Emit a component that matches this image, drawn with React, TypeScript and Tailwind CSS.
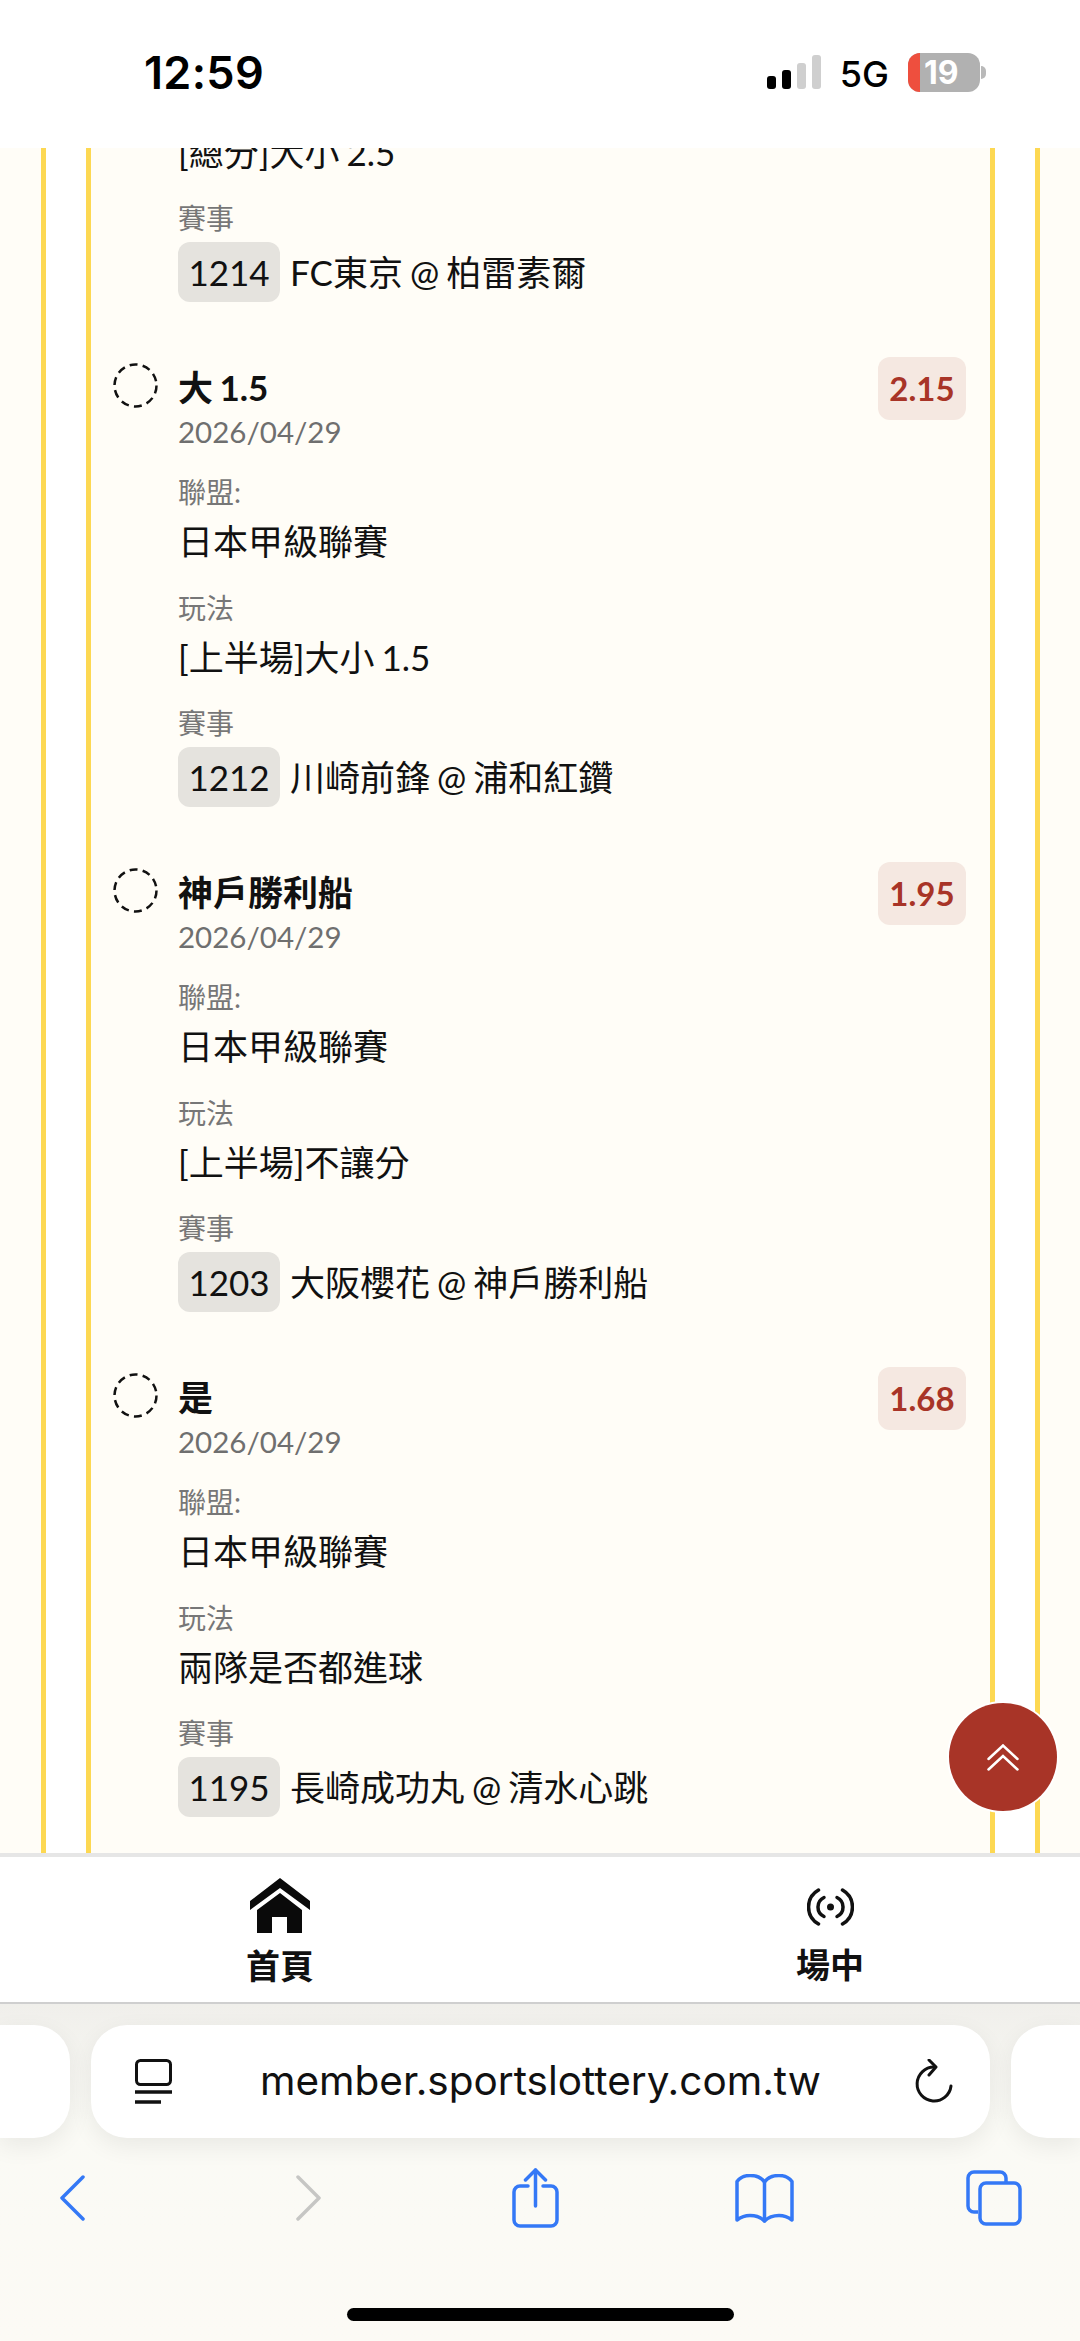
const bets = [
  { title: "大 1.5", odds: "2.15", play: "[上半場]大小 1.5", code: "1212", match: "川崎前鋒 @ 浦和紅鑽" },
  { title: "神戶勝利船", odds: "1.95", play: "[上半場]不讓分", code: "1203", match: "大阪櫻花 @ 神戶勝利船" },
  { title: "是", odds: "1.68", play: "兩隊是否都進球", code: "1195", match: "長崎成功丸 @ 清水心跳" },
];

function PlayAndMatch({ play, code, match }: { play: string; code: string; match: string }) {
  return (
    <>
      <div className="text-[35px] leading-[48px] text-[#111]">{play}</div>
      <div className="mt-[22px] text-[28px] leading-[40px] text-[#777]">賽事</div>
      <div className="mt-[4px] flex items-center">
        <span className="flex h-[60px] w-[102px] items-center justify-center rounded-[12px] bg-[#e5e3de] text-[35px] text-[#111]">
          {code}
        </span>
        <span className="ml-[10px] text-[35px] text-[#111]">{match}</span>
      </div>
    </>
  );
}

function BetRow({ title, odds, play, code, match }: (typeof bets)[number]) {
  return (
    <div className="flex pt-[55px]">
      <svg viewBox="0 0 45 45" className="mt-[6px] h-[45px] w-[45px] shrink-0" fill="none" stroke="#111" strokeWidth="2.5" strokeDasharray="8 5.2">
        <circle cx="22.5" cy="22.5" r="21" />
      </svg>
      <div className="ml-[20px] flex-1">
        <div className="flex h-[63px] items-center justify-between">
          <span className="-mt-[2px] text-[35px] font-bold text-[#111]">{title}</span>
          <span className="flex h-[63px] w-[88px] items-center justify-center rounded-[12px] bg-[#f5e8e1] text-[33px] font-bold text-[#a83427]">
            {odds}
          </span>
        </div>
        <div className="-mt-[10px] text-[29.5px] leading-[44px] text-[#6f6f6f]">2026/04/29</div>
        <div className="mt-[18px] text-[28px] leading-[40px] text-[#777]">聯盟:</div>
        <div className="mt-[5px] text-[35px] leading-[48px] text-[#111]">日本甲級聯賽</div>
        <div className="mt-[23px] text-[28px] leading-[40px] text-[#777]">玩法</div>
        <div className="mt-[5px]">
          <PlayAndMatch play={play} code={code} match={match} />
        </div>
      </div>
    </div>
  );
}

function StatusBar() {
  return (
    <div className="flex h-[148px] shrink-0 items-start bg-white font-['Inter',sans-serif]">
      <span className="ml-[144px] mt-[48px] text-[45px] font-semibold leading-[50px] tracking-[0.3px] text-black">12:59</span>
      <div className="ml-auto mr-[94px] mt-[53px] flex items-start">
        <div className="mt-[2px] flex h-[34px] items-end gap-[6px]">
          <div className="h-[13px] w-[9px] rounded-[3px] bg-black" />
          <div className="h-[19px] w-[9px] rounded-[3px] bg-black" />
          <div className="h-[26px] w-[9px] rounded-[3px] bg-[#cfcfcf]" />
          <div className="h-[34px] w-[9px] rounded-[3px] bg-[#cfcfcf]" />
        </div>
        <span className="ml-[19px] mt-[2px] text-[36px] font-medium leading-[38px] text-black">5G</span>
        <div className="relative ml-[19px] flex h-[39px] w-[72px] items-center overflow-hidden rounded-[12px] bg-[#b1b1b1]">
          <div className="h-full w-[12px] bg-[#ee4f3e]" />
          <span className="ml-[4px] text-[32px] font-bold leading-none text-white">19</span>
        </div>
        <div className="ml-[1px] mt-[13px] h-[13px] w-[5px] rounded-r-full bg-[#b9b9b9]" />
      </div>
    </div>
  );
}

function BottomNav() {
  return (
    <div className="flex h-[151px] shrink-0 border-t-[4px] border-b-[2px] border-t-[#e6e6e6] border-b-[#cfcfcf] bg-white">
      <div className="flex w-[560px] flex-col items-center pt-[21px]">
        <svg viewBox="0 0 60 55" className="h-[55px] w-[60px]" fill="#0a0a0a">
          <path d="M30 0 60 23V32L30 10 0 32V23Z" />
          <path d="M30 15 52 32V55H37V39H22V55H7V32Z" />
        </svg>
        <span className="mt-[11px] text-[34px] font-semibold leading-[44px] text-[#111]">首頁</span>
      </div>
      <div className="ml-[20px] flex flex-1 flex-col items-center pt-[31px]">
        <svg viewBox="0 0 47 38" className="h-[38px] w-[47px]" fill="none" stroke="#111" strokeWidth="3.5" strokeLinecap="round">
          <circle cx="23.5" cy="19" r="3.5" fill="#111" stroke="none" />
          <path d="M17 9.5A10.5 10.5 0 0 0 17 28.5M30 9.5A10.5 10.5 0 0 1 30 28.5" />
          <path d="M11.5 2A19.5 19.5 0 0 0 11.5 36M35.5 2A19.5 19.5 0 0 1 35.5 36" />
        </svg>
        <span className="mt-[17px] text-[34px] font-semibold leading-[44px] text-[#111]">場中</span>
      </div>
    </div>
  );
}

function BrowserChrome() {
  return (
    <div className="h-[337px] shrink-0 bg-gradient-to-b from-[#f0efeb] via-[#fafaf5] via-35% to-[#fcfaf5] pt-[21px] font-['Inter',sans-serif]">
      <div className="flex h-[113px] gap-[21px]">
        <div className="h-[113px] w-[70px] shrink-0 rounded-r-[36px] bg-white shadow-[0_8px_24px_rgba(0,0,0,0.07)]" />
        <div className="flex h-[113px] w-[899px] shrink-0 items-center rounded-[36px] bg-white pl-[44px] pr-[37px] shadow-[0_8px_24px_rgba(0,0,0,0.07)]">
          <svg viewBox="0 0 37 45" className="h-[45px] w-[37px] shrink-0" fill="none" stroke="#111">
            <rect x="1.5" y="1.5" width="34" height="24" rx="4" strokeWidth="3" />
            <path d="M0 33H37" strokeWidth="3.5" />
            <path d="M0 43H26" strokeWidth="3.5" />
          </svg>
          <span className="ml-[88px] text-[40.5px] leading-none text-[#111]">member.sportslottery.com.tw</span>
          <svg viewBox="0 0 38 46" className="ml-auto h-[46px] w-[38px] shrink-0" fill="none" stroke="#111" strokeWidth="3" strokeLinecap="round" strokeLinejoin="round">
            <path d="M19 8A17 17 0 1 0 36 27" />
            <path d="M14 1 21 8 14 16" />
          </svg>
        </div>
        <div className="h-[113px] flex-1 rounded-l-[36px] bg-white shadow-[0_8px_24px_rgba(0,0,0,0.07)]" />
      </div>
      <div className="mt-[30px] flex h-[60px] items-center pl-[60px]">
        <svg viewBox="0 0 25 46" className="h-[46px] w-[25px]" fill="none" stroke="#3478f6" strokeWidth="3.5" strokeLinecap="round" strokeLinejoin="round">
          <path d="M23 2 2 23 23 44" />
        </svg>
        <svg viewBox="0 0 25 46" className="ml-[211px] h-[46px] w-[25px]" fill="none" stroke="#c6c6c4" strokeWidth="3.5" strokeLinecap="round" strokeLinejoin="round">
          <path d="M2 2 23 23 2 44" />
        </svg>
        <svg viewBox="0 0 47 60" className="ml-[191px] h-[60px] w-[47px]" fill="none" stroke="#3478f6" strokeWidth="3.5" strokeLinecap="round" strokeLinejoin="round">
          <path d="M16 18H8a6 6 0 0 0-6 6v28a6 6 0 0 0 6 6h31a6 6 0 0 0 6-6V24a6 6 0 0 0-6-6h-8" />
          <path d="M23.5 38V2" />
          <path d="M13.5 12 23.5 2 33.5 12" />
        </svg>
        <svg viewBox="0 0 59 49" className="ml-[176px] h-[49px] w-[59px]" fill="none" stroke="#3478f6" strokeWidth="3.5" strokeLinecap="round" strokeLinejoin="round">
          <path d="M29.5 8C26 3 20 1.5 15 1.5 10 1.5 5 3.5 2 7.5V46C6 43 10 41.5 15 41.5 21 41.5 26 43.5 29.5 47 33 43.5 38 41.5 44 41.5 49 41.5 53 43 57 46V7.5C54 3.5 49 1.5 44 1.5 39 1.5 33 3 29.5 8Z" />
          <path d="M29.5 8V47" />
        </svg>
        <svg viewBox="0 0 56 56" className="ml-[172px] h-[56px] w-[56px]" fill="none" stroke="#3478f6" strokeWidth="3.5" strokeLinejoin="round">
          <path d="M12 42H8a6 6 0 0 1-6-6V8a6 6 0 0 1 6-6h26a6 6 0 0 1 6 6v4" />
          <rect x="14" y="13" width="40" height="41" rx="6" />
        </svg>
      </div>
      <div className="mx-auto mt-[80px] h-[13px] w-[387px] rounded-full bg-black" />
    </div>
  );
}

export default function App() {
  return (
    <div className="relative flex h-[2341px] w-[1080px] flex-col overflow-hidden bg-white font-['Lato','Noto_Sans_CJK_TC',sans-serif] [word-spacing:-2px]">
      <StatusBar />

      {/* scrolled list, first bet is already cut off at the top */}
      <div className="min-h-0 flex-1 overflow-hidden bg-[#fffdf7] pl-[41px] pr-[40px]">
        <div className="h-full border-x-[5px] border-[#fdd852] bg-white px-[40px]">
          <div className="h-full overflow-hidden border-x-[5px] border-[#fdd852] bg-[#fffdf7] pl-[22px] pr-[24px]">
            <div className="-mt-[20px]">
              <div className="pl-[65px]">
                <PlayAndMatch play="[總分]大小 2.5" code="1214" match="FC東京 @ 柏雷素爾" />
              </div>
              {bets.map((b) => (
                <BetRow key={b.code} {...b} />
              ))}
            </div>
          </div>
        </div>
      </div>

      <BottomNav />
      <BrowserChrome />

      <button className="absolute left-[949px] top-[1703px] flex h-[108px] w-[108px] items-center justify-center rounded-full bg-[#a83427] shadow-[0_0_0_2px_#fff]">
        <svg viewBox="0 0 32 27" className="h-[27px] w-[32px]" fill="none" stroke="#fff" strokeWidth="2.5" strokeLinecap="round">
          <path d="M1.5 15 16 1.5 30.5 15" />
          <path d="M1.5 25.5 16 12 30.5 25.5" />
        </svg>
      </button>
    </div>
  );
}
